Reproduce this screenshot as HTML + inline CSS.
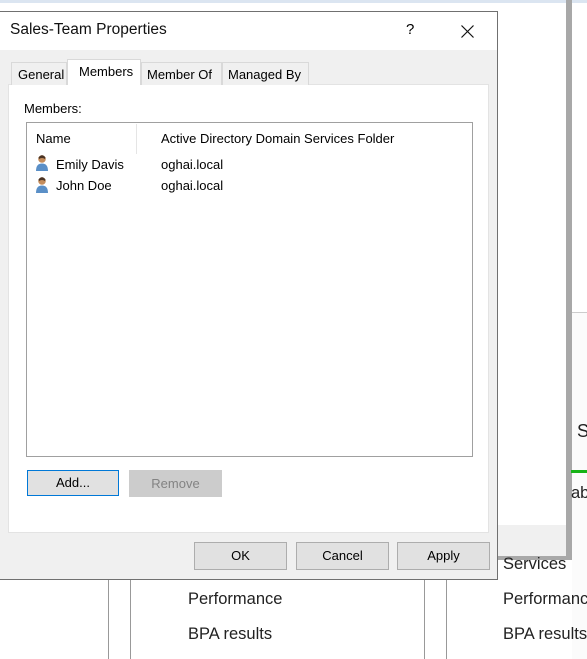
<!DOCTYPE html>
<html><head><style>
*{margin:0;padding:0;box-sizing:border-box}
body{width:587px;height:659px;overflow:hidden;background:#fff;position:relative;font-family:"Liberation Sans",sans-serif;font-size:13px;color:#000}
.a{position:absolute;white-space:nowrap}
.btn{position:absolute;background:#e1e1e1;border:1px solid #adadad;text-align:center;line-height:25px;font-size:13px}
.big{font-size:16.5px;color:#222}
</style></head><body>
<div class="a" style="left:0;top:0;width:587px;height:3px;background:#dbe5f1"></div>
<div class="a" style="left:0;top:3px;width:566px;height:553px;background:#fff;border-bottom:1px solid #c8c8c8"></div>
<div class="a" style="left:497px;top:525px;width:69px;height:31px;background:#f0f0f0"></div>
<div class="a" style="left:566px;top:0;width:6px;height:560px;background:#a8a8a8"></div>
<div class="a" style="left:497px;top:556px;width:75px;height:4px;background:#a8a8a8"></div>
<div class="a" style="left:572px;top:312px;width:15px;height:1px;background:#ccc"></div>
<div class="a" style="left:572px;top:313px;width:15px;height:346px;background:#fbfbfb"></div>
<div class="a big" style="left:577px;top:421px;font-size:18px">S</div>
<div class="a" style="left:571px;top:470px;width:16px;height:3px;background:#16b316"></div>
<div class="a big" style="left:571px;top:484px">abi</div>
<div class="a" style="left:108px;top:579px;width:1px;height:80px;background:#999"></div>
<div class="a" style="left:130px;top:579px;width:1px;height:80px;background:#999"></div>
<div class="a" style="left:424px;top:579px;width:1px;height:80px;background:#999"></div>
<div class="a" style="left:446px;top:579px;width:1px;height:80px;background:#999"></div>
<div class="a big" style="left:188px;top:590px">Performance</div>
<div class="a big" style="left:188px;top:625px">BPA results</div>
<div class="a big" style="left:503px;top:555px">Services</div>
<div class="a big" style="left:503px;top:590px">Performance</div>
<div class="a big" style="left:503px;top:625px">BPA results</div>
<div class="a" style="left:-1px;top:11px;width:499px;height:569px;background:#f0f0f0;border:1px solid #707070"></div>
<div class="a" style="left:0;top:12px;width:497px;height:38px;background:#fff"></div>
<div class="a" style="left:10px;top:21px;font-size:15.5px;color:#111">Sales-Team Properties</div>
<div class="a" style="left:406px;top:21px;font-size:15px">?</div>
<svg class="a" style="left:461px;top:25px" width="13" height="13"><path d="M0.5 0.5L12.5 12.5M12.5 0.5L0.5 12.5" stroke="#111" stroke-width="1.2"/></svg>
<div class="a" style="left:8px;top:84px;width:481px;height:449px;background:#fff;border:1px solid #e3e3e3"></div>
<div class="a" style="left:11px;top:62px;width:56px;height:23px;background:#f0f0f0;border:1px solid #d9d9d9;border-bottom:none;padding:4px 0 0 6px">General</div>
<div class="a" style="left:67px;top:59px;width:74px;height:26px;background:#fff;border:1px solid #d9d9d9;border-bottom:none;padding:4px 0 0 11px">Members</div>
<div class="a" style="left:141px;top:62px;width:81px;height:23px;background:#f0f0f0;border:1px solid #d9d9d9;border-bottom:none;padding:4px 0 0 5px">Member Of</div>
<div class="a" style="left:222px;top:62px;width:87px;height:23px;background:#f0f0f0;border:1px solid #d9d9d9;border-bottom:none;padding:4px 0 0 5px">Managed By</div>
<div class="a" style="left:24px;top:101px">Members:</div>
<div class="a" style="left:26px;top:122px;width:447px;height:335px;background:#fff;border:1px solid #a0a0a0"></div>
<div class="a" style="left:136px;top:124px;width:1px;height:30px;background:#e5e5e5"></div>
<div class="a" style="left:36px;top:131px">Name</div>
<div class="a" style="left:161px;top:131px">Active Directory Domain Services Folder</div>
<svg class="a" style="left:34px;top:154px" width="17" height="18"><circle cx="8" cy="5" r="3.8" fill="#c58d5c"/><path d="M4.5 3.5Q8 -1 11.5 3.5L11 5Q8 3 5 5Z" fill="#4a3425"/><path d="M2 17Q2 9.5 8 9.5Q14 9.5 14 17Z" fill="#5a8fc7"/></svg>
<svg class="a" style="left:34px;top:176px" width="17" height="18"><circle cx="8" cy="5" r="3.8" fill="#c58d5c"/><path d="M4.5 3.5Q8 -1 11.5 3.5L11 5Q8 3 5 5Z" fill="#4a3425"/><path d="M2 17Q2 9.5 8 9.5Q14 9.5 14 17Z" fill="#5a8fc7"/></svg>
<div class="a" style="left:56px;top:157px">Emily Davis</div>
<div class="a" style="left:161px;top:157px">oghai.local</div>
<div class="a" style="left:56px;top:178px">John Doe</div>
<div class="a" style="left:161px;top:178px">oghai.local</div>
<div class="btn" style="left:27px;top:470px;width:92px;height:26px;border-color:#0078d7;line-height:24px">Add...</div>
<div class="btn" style="left:129px;top:470px;width:93px;height:27px;background:#ccc;border-color:#ccc;color:#838383;line-height:26px">Remove</div>
<div class="btn" style="left:194px;top:542px;width:93px;height:28px;line-height:26px">OK</div>
<div class="btn" style="left:296px;top:542px;width:93px;height:28px;line-height:26px">Cancel</div>
<div class="btn" style="left:397px;top:542px;width:93px;height:28px;line-height:26px">Apply</div>
</body></html>
